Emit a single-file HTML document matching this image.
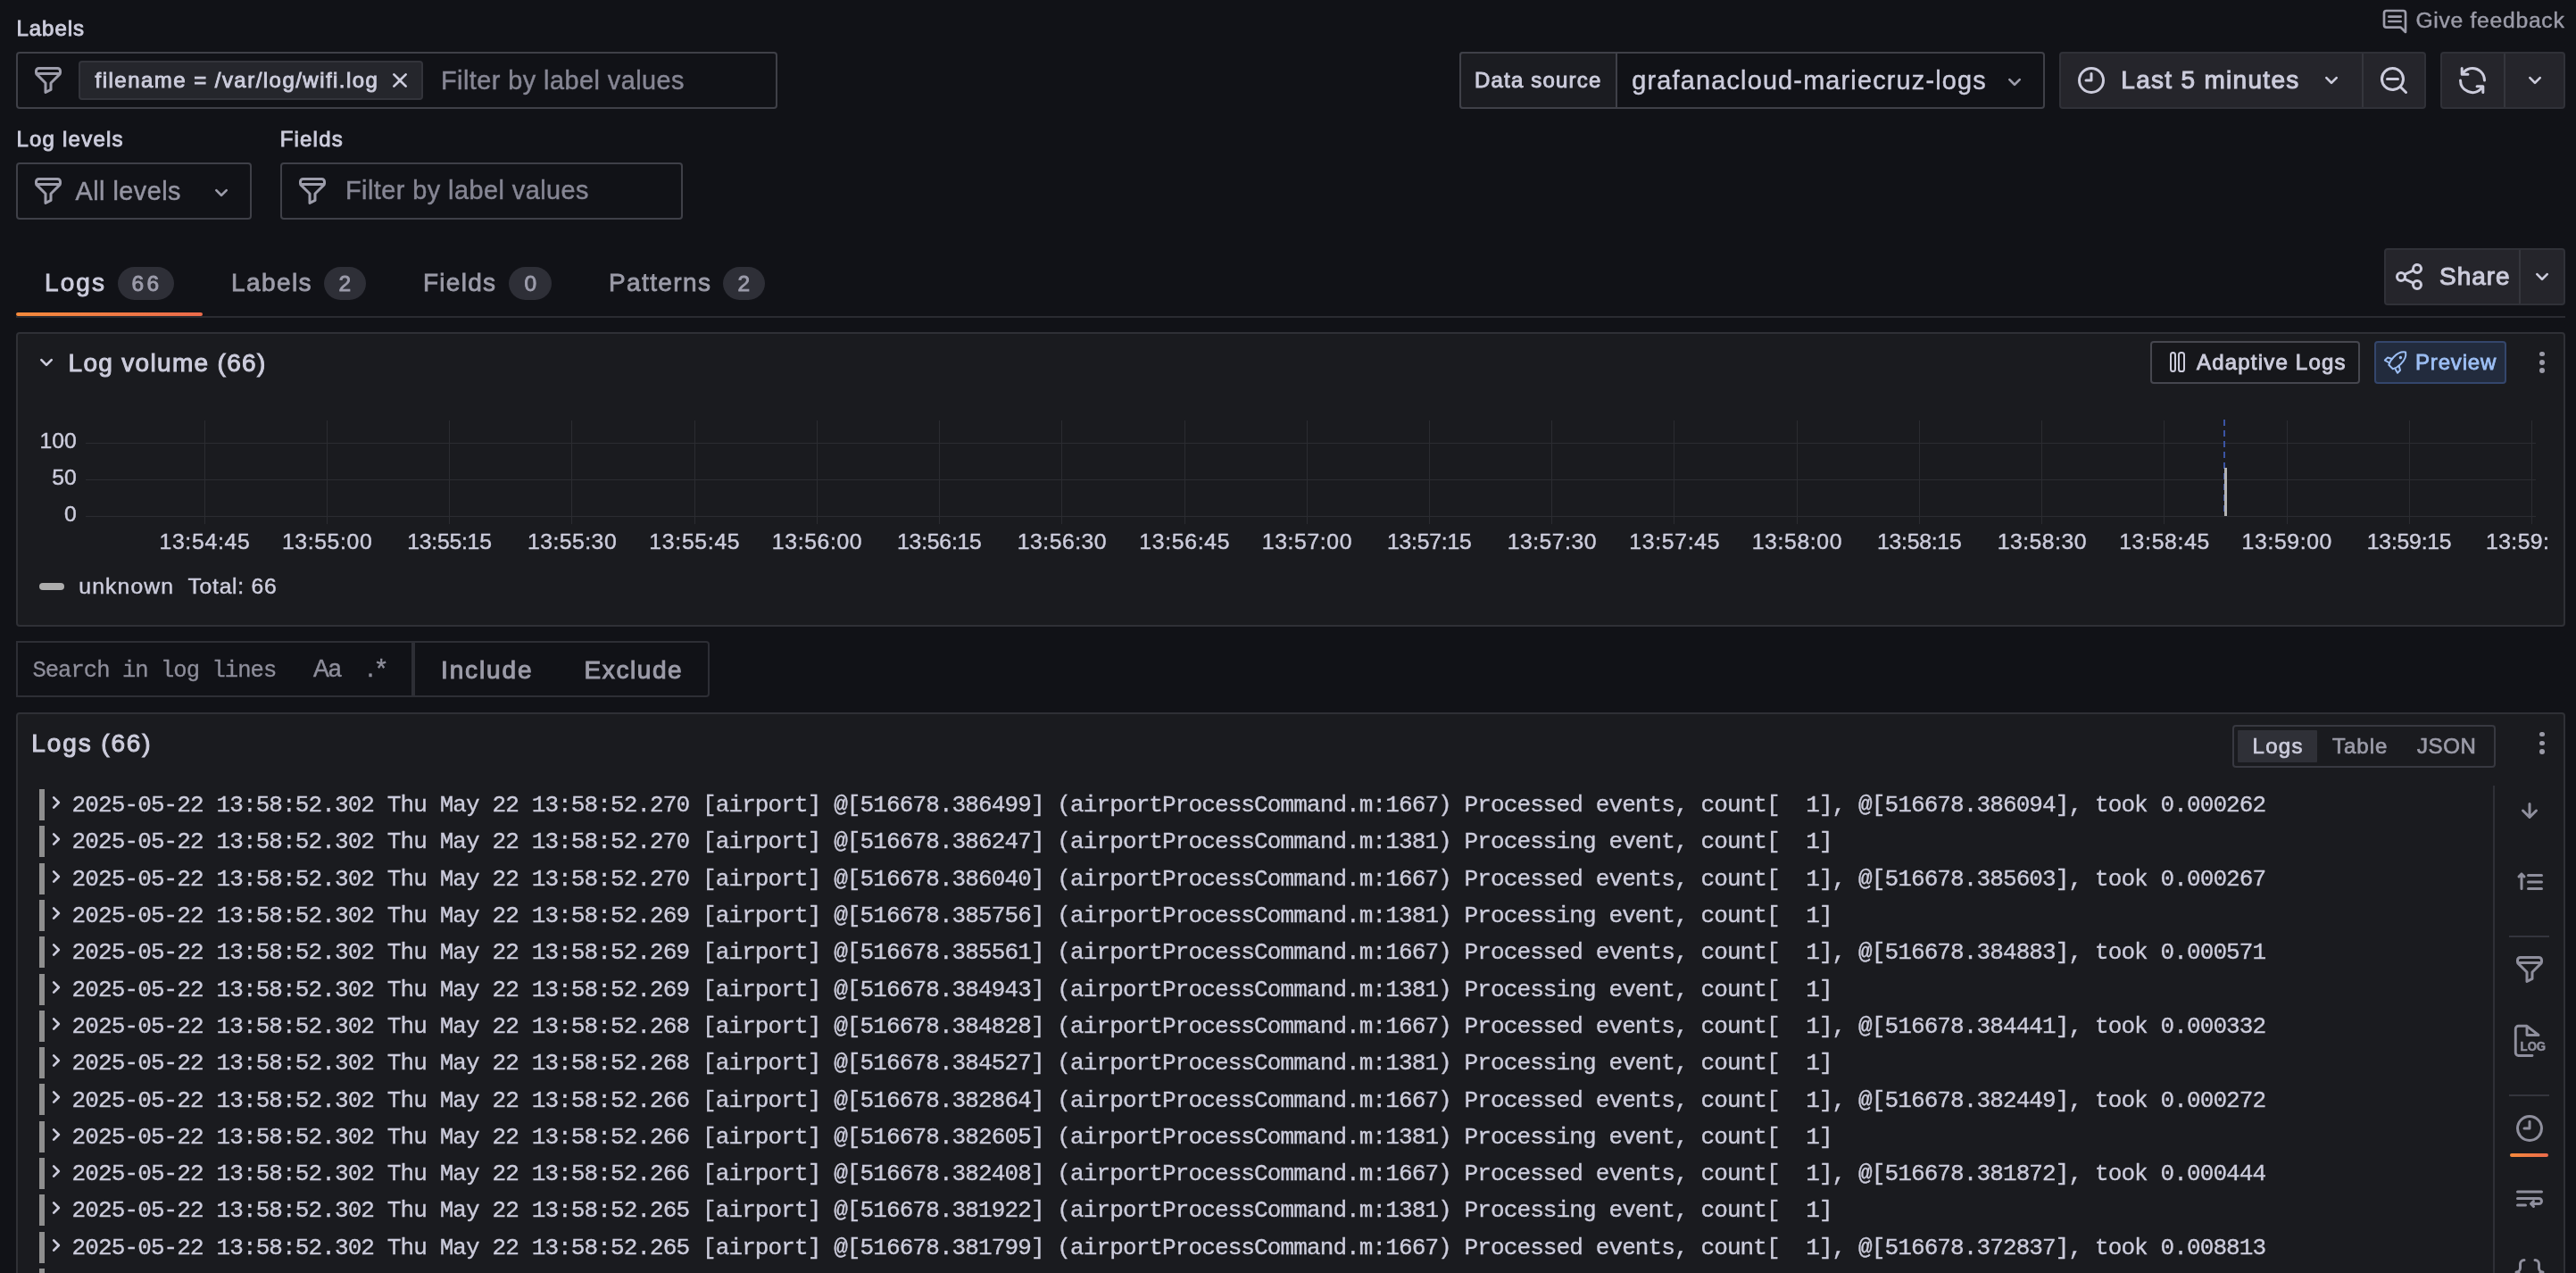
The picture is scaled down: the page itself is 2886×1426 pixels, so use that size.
<!DOCTYPE html>
<html lang="en"><head><meta charset="utf-8"><title>Logs Drilldown</title>
<style>
html,body{margin:0;padding:0;width:2886px;height:1426px;overflow:hidden;}
body{width:2886px;height:1426px;overflow:hidden;position:relative;background:#111217;font-family:"Liberation Sans",sans-serif;}
.a{position:absolute;box-sizing:border-box;}
.t{white-space:pre;}
</style></head><body>
<div id="app" style="position:absolute;left:0;top:0;width:2886px;height:1426px;overflow:hidden;will-change:transform">
<span class="a t" style="left:18.50px;top:19.68px;font:500 24.0px/24.0px 'Liberation Sans', sans-serif;color:#ccccdc;letter-spacing:0.955px;-webkit-text-stroke:0.9px #ccccdc;">Labels</span><div class="a" style="left:18px;top:58px;width:853px;height:64px;background:#111217;border:2px solid #3f4048;border-radius:4px;"></div><div class="a" style="left:88px;top:68px;width:386px;height:44px;background:#25262c;border:2px solid #33343b;border-radius:4px;"></div><span class="a t" style="left:106.60px;top:78.18px;font:500 24.0px/24.0px 'Liberation Sans', sans-serif;color:#ccccdc;letter-spacing:1.465px;-webkit-text-stroke:0.9px #ccccdc;">filename = /var/log/wifi.log</span><span class="a t" style="left:494.00px;top:75.59px;font:400 28.84px/28.84px 'Liberation Sans', sans-serif;color:#868694;letter-spacing:0.459px;-webkit-text-stroke:0.45px #868694;">Filter by label values</span><span class="a t" style="left:2706.40px;top:10.57px;font:400 24.72px/24.72px 'Liberation Sans', sans-serif;color:#9b9ba8;letter-spacing:0.695px;-webkit-text-stroke:0.45px #9b9ba8;">Give feedback</span><div class="a" style="left:1635px;top:58px;width:656px;height:64px;background:#111217;border:2px solid #3f4048;border-radius:4px;"></div><div class="a" style="left:1635px;top:58px;width:177px;height:64px;background:#1b1c21;border:2px solid #3f4048;border-radius:4px 0 0 4px;"></div><span class="a t" style="left:1652.00px;top:78.18px;font:500 24.0px/24.0px 'Liberation Sans', sans-serif;color:#ccccdc;letter-spacing:1.195px;-webkit-text-stroke:0.9px #ccccdc;">Data source</span><span class="a t" style="left:1828.30px;top:75.59px;font:400 28.84px/28.84px 'Liberation Sans', sans-serif;color:#ccccdc;letter-spacing:1.196px;-webkit-text-stroke:0.45px #ccccdc;">grafanacloud-mariecruz-logs</span><div class="a" style="left:2307px;top:58px;width:411px;height:64px;background:#25252b;border:2px solid #303138;border-radius:4px;"></div><div class="a" style="left:2646px;top:60px;width:2px;height:60px;background:#35363d;"></div><span class="a t" style="left:2376.30px;top:76.30px;font:500 28.0px/28.0px 'Liberation Sans', sans-serif;color:#ccccdc;letter-spacing:1.300px;-webkit-text-stroke:1.0px #ccccdc;">Last 5 minutes</span><div class="a" style="left:2734px;top:58px;width:140px;height:64px;background:#25252b;border:2px solid #303138;border-radius:4px;"></div><div class="a" style="left:2805px;top:60px;width:2px;height:60px;background:#35363d;"></div><span class="a t" style="left:18.50px;top:143.68px;font:500 24.0px/24.0px 'Liberation Sans', sans-serif;color:#ccccdc;letter-spacing:1.214px;-webkit-text-stroke:0.9px #ccccdc;">Log levels</span><div class="a" style="left:18px;top:182px;width:264px;height:64px;background:#111217;border:2px solid #3f4048;border-radius:4px;"></div><span class="a t" style="left:84.50px;top:199.59px;font:400 28.84px/28.84px 'Liberation Sans', sans-serif;color:#9494a2;letter-spacing:0.463px;-webkit-text-stroke:0.45px #9494a2;">All levels</span><span class="a t" style="left:313.70px;top:143.68px;font:500 24.0px/24.0px 'Liberation Sans', sans-serif;color:#ccccdc;letter-spacing:1.196px;-webkit-text-stroke:0.9px #ccccdc;">Fields</span><div class="a" style="left:314px;top:182px;width:451px;height:64px;background:#111217;border:2px solid #3f4048;border-radius:4px;"></div><span class="a t" style="left:387.00px;top:199.29px;font:400 28.84px/28.84px 'Liberation Sans', sans-serif;color:#868694;letter-spacing:0.459px;-webkit-text-stroke:0.45px #868694;">Filter by label values</span><div class="a" style="left:18px;top:354px;width:2856px;height:2px;background:#2a2b31;"></div><span class="a t" style="left:50.00px;top:302.60px;font:500 28.0px/28.0px 'Liberation Sans', sans-serif;color:#ccccdc;letter-spacing:2.094px;-webkit-text-stroke:0.9px #ccccdc;">Logs</span><div class="a" style="left:132px;top:299px;width:63px;height:37px;background:#2e2f37;border-radius:19px;"></div><span class="a t" style="left:147.60px;top:305.56px;font:500 24.5px/24.5px 'Liberation Sans', sans-serif;color:#9c9cab;letter-spacing:3.374px;-webkit-text-stroke:0.9px #9c9cab;">66</span><div class="a" style="left:18px;top:350px;width:209px;height:4px;border-radius:2px;background:linear-gradient(90deg,#f58a3c,#ec6b4b)"></div><span class="a t" style="left:259.00px;top:302.60px;font:500 28.0px/28.0px 'Liberation Sans', sans-serif;color:#9b9ba8;letter-spacing:1.398px;-webkit-text-stroke:0.8px #9b9ba8;">Labels</span><div class="a" style="left:363px;top:299px;width:47px;height:37px;background:#2e2f37;border-radius:19px;"></div><span class="a t" style="left:379.50px;top:305.56px;font:500 24.5px/24.5px 'Liberation Sans', sans-serif;color:#9c9cab;-webkit-text-stroke:0.9px #9c9cab;">2</span><span class="a t" style="left:474.00px;top:302.60px;font:500 28.0px/28.0px 'Liberation Sans', sans-serif;color:#9b9ba8;letter-spacing:1.262px;-webkit-text-stroke:0.8px #9b9ba8;">Fields</span><div class="a" style="left:570px;top:299px;width:48px;height:37px;background:#2e2f37;border-radius:19px;"></div><span class="a t" style="left:587.50px;top:305.56px;font:500 24.5px/24.5px 'Liberation Sans', sans-serif;color:#9c9cab;-webkit-text-stroke:0.9px #9c9cab;">0</span><span class="a t" style="left:682.00px;top:302.60px;font:500 28.0px/28.0px 'Liberation Sans', sans-serif;color:#9b9ba8;letter-spacing:1.389px;-webkit-text-stroke:0.8px #9b9ba8;">Patterns</span><div class="a" style="left:810px;top:299px;width:47px;height:37px;background:#2e2f37;border-radius:19px;"></div><span class="a t" style="left:826.50px;top:305.56px;font:500 24.5px/24.5px 'Liberation Sans', sans-serif;color:#9c9cab;-webkit-text-stroke:0.9px #9c9cab;">2</span><div class="a" style="left:2671px;top:278px;width:203px;height:64px;background:#25252b;border:2px solid #303138;border-radius:4px;"></div><div class="a" style="left:2822px;top:280px;width:2px;height:60px;background:#35363d;"></div><span class="a t" style="left:2733.00px;top:296.30px;font:500 28.0px/28.0px 'Liberation Sans', sans-serif;color:#ccccdc;letter-spacing:0.964px;-webkit-text-stroke:1.0px #ccccdc;">Share</span><div class="a" style="left:18px;top:372px;width:2856px;height:330px;background:#1a1b1f;border:2px solid #2f3036;border-radius:4px;"></div><span class="a t" style="left:76.50px;top:392.60px;font:500 28.0px/28.0px 'Liberation Sans', sans-serif;color:#ccccdc;letter-spacing:1.321px;-webkit-text-stroke:1.0px #ccccdc;">Log volume (66)</span><div class="a" style="left:2409px;top:382px;width:235px;height:48px;background:#16171b;border:2px solid #46474f;border-radius:4px;"></div><span class="a t" style="left:2461.00px;top:394.18px;font:500 24.0px/24.0px 'Liberation Sans', sans-serif;color:#ccccdc;letter-spacing:1.199px;-webkit-text-stroke:0.9px #ccccdc;">Adaptive Logs</span><div class="a" style="left:2660px;top:382px;width:148px;height:48px;background:#222b3d;border:2px solid #34466c;border-radius:4px;"></div><span class="a t" style="left:2706.00px;top:394.18px;font:500 24.0px/24.0px 'Liberation Sans', sans-serif;color:#9dbff5;letter-spacing:0.829px;-webkit-text-stroke:0.8px #9dbff5;">Preview</span><div class="a" style="left:2845px;top:393.7px;width:5.6px;height:5.6px;background:#9b9ba8;border-radius:3px;"></div><div class="a" style="left:2845px;top:403.0px;width:5.6px;height:5.6px;background:#9b9ba8;border-radius:3px;"></div><div class="a" style="left:2845px;top:412.4px;width:5.6px;height:5.6px;background:#9b9ba8;border-radius:3px;"></div><div class="a" style="left:96px;top:496px;width:2745px;height:1px;background:#2b2c31;"></div><div class="a" style="left:96px;top:537px;width:2745px;height:1px;background:#2b2c31;"></div><div class="a" style="left:96px;top:578px;width:2745px;height:1px;background:#2b2c31;"></div><div class="a" style="left:228.7px;top:470.5px;width:1px;height:116px;background:#2b2c31;"></div><div class="a" style="left:365.93px;top:470.5px;width:1px;height:116px;background:#2b2c31;"></div><div class="a" style="left:503.16px;top:470.5px;width:1px;height:116px;background:#2b2c31;"></div><div class="a" style="left:640.39px;top:470.5px;width:1px;height:116px;background:#2b2c31;"></div><div class="a" style="left:777.62px;top:470.5px;width:1px;height:116px;background:#2b2c31;"></div><div class="a" style="left:914.85px;top:470.5px;width:1px;height:116px;background:#2b2c31;"></div><div class="a" style="left:1052.08px;top:470.5px;width:1px;height:116px;background:#2b2c31;"></div><div class="a" style="left:1189.31px;top:470.5px;width:1px;height:116px;background:#2b2c31;"></div><div class="a" style="left:1326.54px;top:470.5px;width:1px;height:116px;background:#2b2c31;"></div><div class="a" style="left:1463.77px;top:470.5px;width:1px;height:116px;background:#2b2c31;"></div><div class="a" style="left:1601.0px;top:470.5px;width:1px;height:116px;background:#2b2c31;"></div><div class="a" style="left:1738.23px;top:470.5px;width:1px;height:116px;background:#2b2c31;"></div><div class="a" style="left:1875.46px;top:470.5px;width:1px;height:116px;background:#2b2c31;"></div><div class="a" style="left:2012.69px;top:470.5px;width:1px;height:116px;background:#2b2c31;"></div><div class="a" style="left:2149.92px;top:470.5px;width:1px;height:116px;background:#2b2c31;"></div><div class="a" style="left:2287.15px;top:470.5px;width:1px;height:116px;background:#2b2c31;"></div><div class="a" style="left:2424.38px;top:470.5px;width:1px;height:116px;background:#2b2c31;"></div><div class="a" style="left:2561.61px;top:470.5px;width:1px;height:116px;background:#2b2c31;"></div><div class="a" style="left:2698.84px;top:470.5px;width:1px;height:116px;background:#2b2c31;"></div><div class="a" style="left:2836.07px;top:470.5px;width:1px;height:116px;background:#2b2c31;"></div><span class="a t" style="left:44.51px;top:482.07px;font:400 24.72px/24.72px 'Liberation Sans', sans-serif;color:#ccccdc;-webkit-text-stroke:0.45px #ccccdc;">100</span><span class="a t" style="left:58.25px;top:523.07px;font:400 24.72px/24.72px 'Liberation Sans', sans-serif;color:#ccccdc;-webkit-text-stroke:0.45px #ccccdc;">50</span><span class="a t" style="left:72.00px;top:564.07px;font:400 24.72px/24.72px 'Liberation Sans', sans-serif;color:#ccccdc;-webkit-text-stroke:0.45px #ccccdc;">0</span><span class="a t" style="left:178.45px;top:594.57px;font:400 24.72px/24.72px 'Liberation Sans', sans-serif;color:#ccccdc;letter-spacing:0.718px;-webkit-text-stroke:0.45px #ccccdc;">13:54:45</span><span class="a t" style="left:315.93px;top:594.57px;font:400 24.72px/24.72px 'Liberation Sans', sans-serif;color:#ccccdc;letter-spacing:0.647px;-webkit-text-stroke:0.45px #ccccdc;">13:55:00</span><span class="a t" style="left:456.16px;top:594.57px;font:400 24.72px/24.72px 'Liberation Sans', sans-serif;color:#ccccdc;letter-spacing:-0.210px;-webkit-text-stroke:0.45px #ccccdc;">13:55:15</span><span class="a t" style="left:590.89px;top:594.57px;font:400 24.72px/24.72px 'Liberation Sans', sans-serif;color:#ccccdc;letter-spacing:0.504px;-webkit-text-stroke:0.45px #ccccdc;">13:55:30</span><span class="a t" style="left:727.37px;top:594.57px;font:400 24.72px/24.72px 'Liberation Sans', sans-serif;color:#ccccdc;letter-spacing:0.718px;-webkit-text-stroke:0.45px #ccccdc;">13:55:45</span><span class="a t" style="left:864.85px;top:594.57px;font:400 24.72px/24.72px 'Liberation Sans', sans-serif;color:#ccccdc;letter-spacing:0.647px;-webkit-text-stroke:0.45px #ccccdc;">13:56:00</span><span class="a t" style="left:1005.08px;top:594.57px;font:400 24.72px/24.72px 'Liberation Sans', sans-serif;color:#ccccdc;letter-spacing:-0.210px;-webkit-text-stroke:0.45px #ccccdc;">13:56:15</span><span class="a t" style="left:1139.81px;top:594.57px;font:400 24.72px/24.72px 'Liberation Sans', sans-serif;color:#ccccdc;letter-spacing:0.504px;-webkit-text-stroke:0.45px #ccccdc;">13:56:30</span><span class="a t" style="left:1276.29px;top:594.57px;font:400 24.72px/24.72px 'Liberation Sans', sans-serif;color:#ccccdc;letter-spacing:0.718px;-webkit-text-stroke:0.45px #ccccdc;">13:56:45</span><span class="a t" style="left:1413.77px;top:594.57px;font:400 24.72px/24.72px 'Liberation Sans', sans-serif;color:#ccccdc;letter-spacing:0.647px;-webkit-text-stroke:0.45px #ccccdc;">13:57:00</span><span class="a t" style="left:1554.00px;top:594.57px;font:400 24.72px/24.72px 'Liberation Sans', sans-serif;color:#ccccdc;letter-spacing:-0.210px;-webkit-text-stroke:0.45px #ccccdc;">13:57:15</span><span class="a t" style="left:1688.73px;top:594.57px;font:400 24.72px/24.72px 'Liberation Sans', sans-serif;color:#ccccdc;letter-spacing:0.504px;-webkit-text-stroke:0.45px #ccccdc;">13:57:30</span><span class="a t" style="left:1825.21px;top:594.57px;font:400 24.72px/24.72px 'Liberation Sans', sans-serif;color:#ccccdc;letter-spacing:0.718px;-webkit-text-stroke:0.45px #ccccdc;">13:57:45</span><span class="a t" style="left:1962.69px;top:594.57px;font:400 24.72px/24.72px 'Liberation Sans', sans-serif;color:#ccccdc;letter-spacing:0.647px;-webkit-text-stroke:0.45px #ccccdc;">13:58:00</span><span class="a t" style="left:2102.92px;top:594.57px;font:400 24.72px/24.72px 'Liberation Sans', sans-serif;color:#ccccdc;letter-spacing:-0.210px;-webkit-text-stroke:0.45px #ccccdc;">13:58:15</span><span class="a t" style="left:2237.65px;top:594.57px;font:400 24.72px/24.72px 'Liberation Sans', sans-serif;color:#ccccdc;letter-spacing:0.504px;-webkit-text-stroke:0.45px #ccccdc;">13:58:30</span><span class="a t" style="left:2374.13px;top:594.57px;font:400 24.72px/24.72px 'Liberation Sans', sans-serif;color:#ccccdc;letter-spacing:0.718px;-webkit-text-stroke:0.45px #ccccdc;">13:58:45</span><span class="a t" style="left:2511.61px;top:594.57px;font:400 24.72px/24.72px 'Liberation Sans', sans-serif;color:#ccccdc;letter-spacing:0.647px;-webkit-text-stroke:0.45px #ccccdc;">13:59:00</span><span class="a t" style="left:2651.84px;top:594.57px;font:400 24.72px/24.72px 'Liberation Sans', sans-serif;color:#ccccdc;letter-spacing:-0.210px;-webkit-text-stroke:0.45px #ccccdc;">13:59:15</span><span class="a t" style="left:2785.00px;top:594.57px;font:400 24.72px/24.72px 'Liberation Sans', sans-serif;color:#ccccdc;letter-spacing:0.429px;-webkit-text-stroke:0.45px #ccccdc;">13:59:</span><div class="a" style="left:2490.6px;top:470px;width:2px;height:108px;background:repeating-linear-gradient(180deg,#3b54a3 0 7px,transparent 7px 12px)"></div><div class="a" style="left:2491.6px;top:524px;width:3px;height:54px;background:#b3b3b3;"></div><div class="a" style="left:44px;top:653px;width:28px;height:8px;background:#adadad;border-radius:4px;"></div><span class="a t" style="left:88.30px;top:645.07px;font:400 24.72px/24.72px 'Liberation Sans', sans-serif;color:#ccccdc;letter-spacing:1.133px;-webkit-text-stroke:0.45px #ccccdc;">unknown</span><span class="a t" style="left:210.50px;top:645.07px;font:400 24.72px/24.72px 'Liberation Sans', sans-serif;color:#ccccdc;letter-spacing:0.725px;-webkit-text-stroke:0.45px #ccccdc;">Total: 66</span><div class="a" style="left:18px;top:718px;width:445px;height:63px;background:#111217;border:2px solid #2d2e35;"></div><span class="a t" style="left:36.40px;top:738.85px;font:400 25.5px/25.5px 'Liberation Mono', monospace;color:#8e8e9b;letter-spacing:-0.941px;-webkit-text-stroke:0.3px #8e8e9b;">Search in log lines</span><span class="a t" style="left:351.00px;top:735.93px;font:400 26.78px/26.78px 'Liberation Sans', sans-serif;color:#8e8e9b;letter-spacing:-1.152px;-webkit-text-stroke:0.45px #8e8e9b;">Aa</span><span class="a t" style="left:411.00px;top:734.19px;font:400 28.84px/28.84px 'Liberation Sans', sans-serif;color:#8e8e9b;letter-spacing:2.491px;-webkit-text-stroke:0.45px #8e8e9b;">.*</span><div class="a" style="left:463px;top:718px;width:332px;height:63px;background:#111217;border:2px solid #2d2e35;border-radius:4px;border-radius:0 4px 4px 0;"></div><span class="a t" style="left:494.00px;top:736.60px;font:500 28.0px/28.0px 'Liberation Sans', sans-serif;color:#9b9ba8;letter-spacing:1.881px;-webkit-text-stroke:1.0px #9b9ba8;">Include</span><span class="a t" style="left:654.60px;top:736.60px;font:500 28.0px/28.0px 'Liberation Sans', sans-serif;color:#9b9ba8;letter-spacing:1.576px;-webkit-text-stroke:1.0px #9b9ba8;">Exclude</span><div class="a" style="left:18px;top:798px;width:2856px;height:660px;background:#1a1b1f;border:2px solid #2f3036;border-radius:4px;"></div><span class="a t" style="left:35.30px;top:818.70px;font:500 28.0px/28.0px 'Liberation Sans', sans-serif;color:#ccccdc;letter-spacing:1.879px;-webkit-text-stroke:1.0px #ccccdc;">Logs (66)</span><div class="a" style="left:2501px;top:812px;width:295px;height:48px;background:transparent;border:2px solid #383941;border-radius:4px;"></div><div class="a" style="left:2507px;top:818px;width:89px;height:36px;background:#2f3037;border-radius:1px;"></div><span class="a t" style="left:2523.50px;top:824.28px;font:500 24.0px/24.0px 'Liberation Sans', sans-serif;color:#ccccdc;letter-spacing:1.319px;-webkit-text-stroke:0.7px #ccccdc;">Logs</span><span class="a t" style="left:2613.00px;top:824.28px;font:500 24.0px/24.0px 'Liberation Sans', sans-serif;color:#9b9ba8;letter-spacing:0.993px;-webkit-text-stroke:0.66px #9b9ba8;">Table</span><span class="a t" style="left:2708.00px;top:824.28px;font:500 24.0px/24.0px 'Liberation Sans', sans-serif;color:#9b9ba8;letter-spacing:0.608px;-webkit-text-stroke:0.66px #9b9ba8;">JSON</span><div class="a" style="left:2845px;top:819.9000000000001px;width:5.6px;height:5.6px;background:#9b9ba8;border-radius:3px;"></div><div class="a" style="left:2845px;top:829.5px;width:5.6px;height:5.6px;background:#9b9ba8;border-radius:3px;"></div><div class="a" style="left:2845px;top:839.1px;width:5.6px;height:5.6px;background:#9b9ba8;border-radius:3px;"></div><div class="a" style="left:2793px;top:880px;width:2px;height:560px;background:#2f3037;"></div><div class="a" style="left:2811px;top:1048px;width:45px;height:2px;background:#34353d;"></div><div class="a" style="left:2811px;top:1226px;width:45px;height:2px;background:#34353d;"></div><div class="a" style="left:2812px;top:1292px;width:43px;height:4px;border-radius:2px;background:linear-gradient(90deg,#f58a3c,#ec6b4b)"></div><div class="a" style="left:44px;top:884.0px;width:6px;height:35px;background:#8e8e8e;"></div><span class="a t" style="left:80.60px;top:889.07px;font:400 26px/26px 'Liberation Mono', monospace;color:#ccccdc;letter-spacing:-0.886px;-webkit-text-stroke:0.35px #ccccdc;">2025-05-22 13:58:52.302 Thu May 22 13:58:52.270 [airport] @[516678.386499] (airportProcessCommand.m:1667) Processed events, count[  1], @[516678.386094], took 0.000262</span><svg class="a" style="left:47.4px;top:883.0px" width="32" height="32" viewBox="0 0 24 24" fill="#ccccdc"><path d="M14.83,11.29,10.59,7.05a1,1,0,0,0-1.42,0,1,1,0,0,0,0,1.41L12.71,12,9.17,15.54a1,1,0,0,0,0,1.41,1,1,0,0,0,.71.29,1,1,0,0,0,.71-.29l4.24-4.24A1,1,0,0,0,14.83,11.29Z"/></svg><div class="a" style="left:44px;top:925.31px;width:6px;height:35px;background:#8e8e8e;"></div><span class="a t" style="left:80.60px;top:930.38px;font:400 26px/26px 'Liberation Mono', monospace;color:#ccccdc;letter-spacing:-0.886px;-webkit-text-stroke:0.35px #ccccdc;">2025-05-22 13:58:52.302 Thu May 22 13:58:52.270 [airport] @[516678.386247] (airportProcessCommand.m:1381) Processing event, count[  1]</span><svg class="a" style="left:47.4px;top:924.31px" width="32" height="32" viewBox="0 0 24 24" fill="#ccccdc"><path d="M14.83,11.29,10.59,7.05a1,1,0,0,0-1.42,0,1,1,0,0,0,0,1.41L12.71,12,9.17,15.54a1,1,0,0,0,0,1.41,1,1,0,0,0,.71.29,1,1,0,0,0,.71-.29l4.24-4.24A1,1,0,0,0,14.83,11.29Z"/></svg><div class="a" style="left:44px;top:966.62px;width:6px;height:35px;background:#8e8e8e;"></div><span class="a t" style="left:80.60px;top:971.69px;font:400 26px/26px 'Liberation Mono', monospace;color:#ccccdc;letter-spacing:-0.886px;-webkit-text-stroke:0.35px #ccccdc;">2025-05-22 13:58:52.302 Thu May 22 13:58:52.270 [airport] @[516678.386040] (airportProcessCommand.m:1667) Processed events, count[  1], @[516678.385603], took 0.000267</span><svg class="a" style="left:47.4px;top:965.62px" width="32" height="32" viewBox="0 0 24 24" fill="#ccccdc"><path d="M14.83,11.29,10.59,7.05a1,1,0,0,0-1.42,0,1,1,0,0,0,0,1.41L12.71,12,9.17,15.54a1,1,0,0,0,0,1.41,1,1,0,0,0,.71.29,1,1,0,0,0,.71-.29l4.24-4.24A1,1,0,0,0,14.83,11.29Z"/></svg><div class="a" style="left:44px;top:1007.93px;width:6px;height:35px;background:#8e8e8e;"></div><span class="a t" style="left:80.60px;top:1013.00px;font:400 26px/26px 'Liberation Mono', monospace;color:#ccccdc;letter-spacing:-0.886px;-webkit-text-stroke:0.35px #ccccdc;">2025-05-22 13:58:52.302 Thu May 22 13:58:52.269 [airport] @[516678.385756] (airportProcessCommand.m:1381) Processing event, count[  1]</span><svg class="a" style="left:47.4px;top:1006.93px" width="32" height="32" viewBox="0 0 24 24" fill="#ccccdc"><path d="M14.83,11.29,10.59,7.05a1,1,0,0,0-1.42,0,1,1,0,0,0,0,1.41L12.71,12,9.17,15.54a1,1,0,0,0,0,1.41,1,1,0,0,0,.71.29,1,1,0,0,0,.71-.29l4.24-4.24A1,1,0,0,0,14.83,11.29Z"/></svg><div class="a" style="left:44px;top:1049.24px;width:6px;height:35px;background:#8e8e8e;"></div><span class="a t" style="left:80.60px;top:1054.31px;font:400 26px/26px 'Liberation Mono', monospace;color:#ccccdc;letter-spacing:-0.886px;-webkit-text-stroke:0.35px #ccccdc;">2025-05-22 13:58:52.302 Thu May 22 13:58:52.269 [airport] @[516678.385561] (airportProcessCommand.m:1667) Processed events, count[  1], @[516678.384883], took 0.000571</span><svg class="a" style="left:47.4px;top:1048.24px" width="32" height="32" viewBox="0 0 24 24" fill="#ccccdc"><path d="M14.83,11.29,10.59,7.05a1,1,0,0,0-1.42,0,1,1,0,0,0,0,1.41L12.71,12,9.17,15.54a1,1,0,0,0,0,1.41,1,1,0,0,0,.71.29,1,1,0,0,0,.71-.29l4.24-4.24A1,1,0,0,0,14.83,11.29Z"/></svg><div class="a" style="left:44px;top:1090.55px;width:6px;height:35px;background:#8e8e8e;"></div><span class="a t" style="left:80.60px;top:1095.62px;font:400 26px/26px 'Liberation Mono', monospace;color:#ccccdc;letter-spacing:-0.886px;-webkit-text-stroke:0.35px #ccccdc;">2025-05-22 13:58:52.302 Thu May 22 13:58:52.269 [airport] @[516678.384943] (airportProcessCommand.m:1381) Processing event, count[  1]</span><svg class="a" style="left:47.4px;top:1089.55px" width="32" height="32" viewBox="0 0 24 24" fill="#ccccdc"><path d="M14.83,11.29,10.59,7.05a1,1,0,0,0-1.42,0,1,1,0,0,0,0,1.41L12.71,12,9.17,15.54a1,1,0,0,0,0,1.41,1,1,0,0,0,.71.29,1,1,0,0,0,.71-.29l4.24-4.24A1,1,0,0,0,14.83,11.29Z"/></svg><div class="a" style="left:44px;top:1131.86px;width:6px;height:35px;background:#8e8e8e;"></div><span class="a t" style="left:80.60px;top:1136.93px;font:400 26px/26px 'Liberation Mono', monospace;color:#ccccdc;letter-spacing:-0.886px;-webkit-text-stroke:0.35px #ccccdc;">2025-05-22 13:58:52.302 Thu May 22 13:58:52.268 [airport] @[516678.384828] (airportProcessCommand.m:1667) Processed events, count[  1], @[516678.384441], took 0.000332</span><svg class="a" style="left:47.4px;top:1130.86px" width="32" height="32" viewBox="0 0 24 24" fill="#ccccdc"><path d="M14.83,11.29,10.59,7.05a1,1,0,0,0-1.42,0,1,1,0,0,0,0,1.41L12.71,12,9.17,15.54a1,1,0,0,0,0,1.41,1,1,0,0,0,.71.29,1,1,0,0,0,.71-.29l4.24-4.24A1,1,0,0,0,14.83,11.29Z"/></svg><div class="a" style="left:44px;top:1173.17px;width:6px;height:35px;background:#8e8e8e;"></div><span class="a t" style="left:80.60px;top:1178.24px;font:400 26px/26px 'Liberation Mono', monospace;color:#ccccdc;letter-spacing:-0.886px;-webkit-text-stroke:0.35px #ccccdc;">2025-05-22 13:58:52.302 Thu May 22 13:58:52.268 [airport] @[516678.384527] (airportProcessCommand.m:1381) Processing event, count[  1]</span><svg class="a" style="left:47.4px;top:1172.17px" width="32" height="32" viewBox="0 0 24 24" fill="#ccccdc"><path d="M14.83,11.29,10.59,7.05a1,1,0,0,0-1.42,0,1,1,0,0,0,0,1.41L12.71,12,9.17,15.54a1,1,0,0,0,0,1.41,1,1,0,0,0,.71.29,1,1,0,0,0,.71-.29l4.24-4.24A1,1,0,0,0,14.83,11.29Z"/></svg><div class="a" style="left:44px;top:1214.48px;width:6px;height:35px;background:#8e8e8e;"></div><span class="a t" style="left:80.60px;top:1219.55px;font:400 26px/26px 'Liberation Mono', monospace;color:#ccccdc;letter-spacing:-0.886px;-webkit-text-stroke:0.35px #ccccdc;">2025-05-22 13:58:52.302 Thu May 22 13:58:52.266 [airport] @[516678.382864] (airportProcessCommand.m:1667) Processed events, count[  1], @[516678.382449], took 0.000272</span><svg class="a" style="left:47.4px;top:1213.48px" width="32" height="32" viewBox="0 0 24 24" fill="#ccccdc"><path d="M14.83,11.29,10.59,7.05a1,1,0,0,0-1.42,0,1,1,0,0,0,0,1.41L12.71,12,9.17,15.54a1,1,0,0,0,0,1.41,1,1,0,0,0,.71.29,1,1,0,0,0,.71-.29l4.24-4.24A1,1,0,0,0,14.83,11.29Z"/></svg><div class="a" style="left:44px;top:1255.79px;width:6px;height:35px;background:#8e8e8e;"></div><span class="a t" style="left:80.60px;top:1260.86px;font:400 26px/26px 'Liberation Mono', monospace;color:#ccccdc;letter-spacing:-0.886px;-webkit-text-stroke:0.35px #ccccdc;">2025-05-22 13:58:52.302 Thu May 22 13:58:52.266 [airport] @[516678.382605] (airportProcessCommand.m:1381) Processing event, count[  1]</span><svg class="a" style="left:47.4px;top:1254.79px" width="32" height="32" viewBox="0 0 24 24" fill="#ccccdc"><path d="M14.83,11.29,10.59,7.05a1,1,0,0,0-1.42,0,1,1,0,0,0,0,1.41L12.71,12,9.17,15.54a1,1,0,0,0,0,1.41,1,1,0,0,0,.71.29,1,1,0,0,0,.71-.29l4.24-4.24A1,1,0,0,0,14.83,11.29Z"/></svg><div class="a" style="left:44px;top:1297.1px;width:6px;height:35px;background:#8e8e8e;"></div><span class="a t" style="left:80.60px;top:1302.17px;font:400 26px/26px 'Liberation Mono', monospace;color:#ccccdc;letter-spacing:-0.886px;-webkit-text-stroke:0.35px #ccccdc;">2025-05-22 13:58:52.302 Thu May 22 13:58:52.266 [airport] @[516678.382408] (airportProcessCommand.m:1667) Processed events, count[  1], @[516678.381872], took 0.000444</span><svg class="a" style="left:47.4px;top:1296.1px" width="32" height="32" viewBox="0 0 24 24" fill="#ccccdc"><path d="M14.83,11.29,10.59,7.05a1,1,0,0,0-1.42,0,1,1,0,0,0,0,1.41L12.71,12,9.17,15.54a1,1,0,0,0,0,1.41,1,1,0,0,0,.71.29,1,1,0,0,0,.71-.29l4.24-4.24A1,1,0,0,0,14.83,11.29Z"/></svg><div class="a" style="left:44px;top:1338.41px;width:6px;height:35px;background:#8e8e8e;"></div><span class="a t" style="left:80.60px;top:1343.48px;font:400 26px/26px 'Liberation Mono', monospace;color:#ccccdc;letter-spacing:-0.886px;-webkit-text-stroke:0.35px #ccccdc;">2025-05-22 13:58:52.302 Thu May 22 13:58:52.265 [airport] @[516678.381922] (airportProcessCommand.m:1381) Processing event, count[  1]</span><svg class="a" style="left:47.4px;top:1337.41px" width="32" height="32" viewBox="0 0 24 24" fill="#ccccdc"><path d="M14.83,11.29,10.59,7.05a1,1,0,0,0-1.42,0,1,1,0,0,0,0,1.41L12.71,12,9.17,15.54a1,1,0,0,0,0,1.41,1,1,0,0,0,.71.29,1,1,0,0,0,.71-.29l4.24-4.24A1,1,0,0,0,14.83,11.29Z"/></svg><div class="a" style="left:44px;top:1379.72px;width:6px;height:35px;background:#8e8e8e;"></div><span class="a t" style="left:80.60px;top:1384.79px;font:400 26px/26px 'Liberation Mono', monospace;color:#ccccdc;letter-spacing:-0.886px;-webkit-text-stroke:0.35px #ccccdc;">2025-05-22 13:58:52.302 Thu May 22 13:58:52.265 [airport] @[516678.381799] (airportProcessCommand.m:1667) Processed events, count[  1], @[516678.372837], took 0.008813</span><svg class="a" style="left:47.4px;top:1378.72px" width="32" height="32" viewBox="0 0 24 24" fill="#ccccdc"><path d="M14.83,11.29,10.59,7.05a1,1,0,0,0-1.42,0,1,1,0,0,0,0,1.41L12.71,12,9.17,15.54a1,1,0,0,0,0,1.41,1,1,0,0,0,.71.29,1,1,0,0,0,.71-.29l4.24-4.24A1,1,0,0,0,14.83,11.29Z"/></svg><div class="a" style="left:44px;top:1421.03px;width:6px;height:35px;background:#8e8e8e;"></div><span class="a t" style="left:80.60px;top:1426.10px;font:400 26px/26px 'Liberation Mono', monospace;color:#ccccdc;letter-spacing:-0.886px;-webkit-text-stroke:0.35px #ccccdc;">2025-05-22 13:58:52.302 Thu May 22 13:58:52.265 [airport] @[516678.381500] (airportProcessCommand.m:1381) Processing event, count[  1]</span><svg class="a" style="left:47.4px;top:1420.03px" width="32" height="32" viewBox="0 0 24 24" fill="#ccccdc"><path d="M14.83,11.29,10.59,7.05a1,1,0,0,0-1.42,0,1,1,0,0,0,0,1.41L12.71,12,9.17,15.54a1,1,0,0,0,0,1.41,1,1,0,0,0,.71.29,1,1,0,0,0,.71-.29l4.24-4.24A1,1,0,0,0,14.83,11.29Z"/></svg><svg class="a" style="left:36px;top:72px" width="36" height="36" viewBox="0 0 24 24" fill="#9d9dab"><path d="M19,2H5A3,3,0,0,0,2,5V6.17a3,3,0,0,0,.25,1.2l0,.06a2.81,2.81,0,0,0,.59.86L9,14.41V21a1,1,0,0,0,.47.85A1,1,0,0,0,10,22a1,1,0,0,0,.45-.11l4-2A1,1,0,0,0,15,19V14.41l6.12-6.12a2.81,2.81,0,0,0,.59-.86l0-.06A3,3,0,0,0,22,6.17V5A3,3,0,0,0,19,2ZM13.29,13.29A1,1,0,0,0,13,14v4.38l-2,1V14a1,1,0,0,0-.29-.71L5.41,8H18.59ZM20,6H4V5A1,1,0,0,1,5,4H19a1,1,0,0,1,1,1Z"/></svg><svg class="a" style="left:36px;top:196px" width="36" height="36" viewBox="0 0 24 24" fill="#9d9dab"><path d="M19,2H5A3,3,0,0,0,2,5V6.17a3,3,0,0,0,.25,1.2l0,.06a2.81,2.81,0,0,0,.59.86L9,14.41V21a1,1,0,0,0,.47.85A1,1,0,0,0,10,22a1,1,0,0,0,.45-.11l4-2A1,1,0,0,0,15,19V14.41l6.12-6.12a2.81,2.81,0,0,0,.59-.86l0-.06A3,3,0,0,0,22,6.17V5A3,3,0,0,0,19,2ZM13.29,13.29A1,1,0,0,0,13,14v4.38l-2,1V14a1,1,0,0,0-.29-.71L5.41,8H18.59ZM20,6H4V5A1,1,0,0,1,5,4H19a1,1,0,0,1,1,1Z"/></svg><svg class="a" style="left:332px;top:196px" width="36" height="36" viewBox="0 0 24 24" fill="#9d9dab"><path d="M19,2H5A3,3,0,0,0,2,5V6.17a3,3,0,0,0,.25,1.2l0,.06a2.81,2.81,0,0,0,.59.86L9,14.41V21a1,1,0,0,0,.47.85A1,1,0,0,0,10,22a1,1,0,0,0,.45-.11l4-2A1,1,0,0,0,15,19V14.41l6.12-6.12a2.81,2.81,0,0,0,.59-.86l0-.06A3,3,0,0,0,22,6.17V5A3,3,0,0,0,19,2ZM13.29,13.29A1,1,0,0,0,13,14v4.38l-2,1V14a1,1,0,0,0-.29-.71L5.41,8H18.59ZM20,6H4V5A1,1,0,0,1,5,4H19a1,1,0,0,1,1,1Z"/></svg><svg class="a" style="left:432px;top:74px" width="32" height="32" viewBox="0 0 24 24" fill="#ccccdc"><path d="M13.41,12l4.3-4.29a1,1,0,1,0-1.42-1.42L12,10.59,7.71,6.29A1,1,0,0,0,6.29,7.71L10.59,12l-4.3,4.29a1,1,0,0,0,0,1.42,1,1,0,0,0,1.42,0L12,13.41l4.29,4.3a1,1,0,0,0,1.42,0,1,1,0,0,0,0-1.42Z"/></svg><svg class="a" style="left:232px;top:200px" width="32" height="32" viewBox="0 0 24 24" fill="#9d9dab"><path d="M17,9.17a1,1,0,0,0-1.41,0L12,12.71,8.46,9.17a1,1,0,0,0-1.41,0,1,1,0,0,0,0,1.42l4.24,4.24a1,1,0,0,0,1.42,0L17,10.59A1,1,0,0,0,17,9.17Z"/></svg><svg class="a" style="left:2667px;top:8px" width="32" height="32" viewBox="0 0 24 24" fill="#9d9dab"><path d="M17,7H7A1,1,0,0,0,7,9H17a1,1,0,0,0,0-2Zm0,4H7a1,1,0,0,0,0,2H17a1,1,0,0,0,0-2Zm2-9H5A3,3,0,0,0,2,5V15a3,3,0,0,0,3,3H16.59l3.7,3.71A1,1,0,0,0,21,22a.84.84,0,0,0,.38-.08A1,1,0,0,0,22,21V5A3,3,0,0,0,19,2Zm1,16.59-2.29-2.3A1,1,0,0,0,17,16H5a1,1,0,0,1-1-1V5A1,1,0,0,1,5,4H19a1,1,0,0,1,1,1Z"/></svg><svg class="a" style="left:2241px;top:76px" width="32" height="32" viewBox="0 0 24 24" fill="#9d9dab"><path d="M17,9.17a1,1,0,0,0-1.41,0L12,12.71,8.46,9.17a1,1,0,0,0-1.41,0,1,1,0,0,0,0,1.42l4.24,4.24a1,1,0,0,0,1.42,0L17,10.59A1,1,0,0,0,17,9.17Z"/></svg><svg class="a" style="left:2325px;top:72px" width="36" height="36" viewBox="0 0 24 24" fill="#ccccdc"><path d="M12,2A10,10,0,1,0,22,12,10.01114,10.01114,0,0,0,12,2Zm0,18a8,8,0,1,1,8-8A8.00917,8.00917,0,0,1,12,20ZM12,6a.99974.99974,0,0,0-1,1v4H8a1,1,0,0,0,0,2h4a.99974.99974,0,0,0,1-1V7A.99974.99974,0,0,0,12,6Z"/></svg><svg class="a" style="left:2596px;top:74px" width="32" height="32" viewBox="0 0 24 24" fill="#ccccdc"><path d="M17,9.17a1,1,0,0,0-1.41,0L12,12.71,8.46,9.17a1,1,0,0,0-1.41,0,1,1,0,0,0,0,1.42l4.24,4.24a1,1,0,0,0,1.42,0L17,10.59A1,1,0,0,0,17,9.17Z"/></svg><svg class="a" style="left:2664px;top:72px" width="36" height="36" viewBox="0 0 24 24" fill="#ccccdc"><path d="M21.71,20.29,18,16.61A9,9,0,1,0,16.61,18l3.68,3.68a1,1,0,0,0,1.42,0A1,1,0,0,0,21.71,20.29ZM11,18a7,7,0,1,1,7-7A7,7,0,0,1,11,18Zm4-8H7a1,1,0,0,0,0,2h8a1,1,0,0,0,0-2Z"/></svg><svg class="a" style="left:2752px;top:72px" width="36" height="36" viewBox="0 0 24 24" fill="#ccccdc"><path d="M19.91,15.51H15.38a1,1,0,0,0,0,2h2.4A8,8,0,0,1,4,12a1,1,0,0,0-2,0,10,10,0,0,0,16.88,7.23V21a1,1,0,0,0,2,0V16.5A1,1,0,0,0,19.91,15.51ZM12,2A10,10,0,0,0,5.12,4.77V3a1,1,0,0,0-2,0V7.5a1,1,0,0,0,1,1h4.5a1,1,0,0,0,0-2H6.22A8,8,0,0,1,20,12a1,1,0,0,0,2,0A10,10,0,0,0,12,2Z"/></svg><svg class="a" style="left:2824px;top:74px" width="32" height="32" viewBox="0 0 24 24" fill="#ccccdc"><path d="M17,9.17a1,1,0,0,0-1.41,0L12,12.71,8.46,9.17a1,1,0,0,0-1.41,0,1,1,0,0,0,0,1.42l4.24,4.24a1,1,0,0,0,1.42,0L17,10.59A1,1,0,0,0,17,9.17Z"/></svg><svg class="a" style="left:2681px;top:292px" width="36" height="36" viewBox="0 0 24 24" fill="#ccccdc"><path d="M18,14a4,4,0,0,0-3.08,1.48l-5.1-2.35a3.64,3.64,0,0,0,0-2.26l5.1-2.35A4,4,0,1,0,14,6a4.17,4.17,0,0,0,.07.71L8.79,9.14a4,4,0,1,0,0,5.72l5.28,2.43A4.17,4.17,0,0,0,14,18a4,4,0,1,0,4-4ZM18,4a2,2,0,1,1-2,2A2,2,0,0,1,18,4ZM6,14a2,2,0,1,1,2-2A2,2,0,0,1,6,14Zm12,6a2,2,0,1,1,2-2A2,2,0,0,1,18,20Z"/></svg><svg class="a" style="left:2832px;top:294px" width="32" height="32" viewBox="0 0 24 24" fill="#ccccdc"><path d="M17,9.17a1,1,0,0,0-1.41,0L12,12.71,8.46,9.17a1,1,0,0,0-1.41,0,1,1,0,0,0,0,1.42l4.24,4.24a1,1,0,0,0,1.42,0L17,10.59A1,1,0,0,0,17,9.17Z"/></svg><svg class="a" style="left:36px;top:390px" width="32" height="32" viewBox="0 0 24 24" fill="#ccccdc"><path d="M17,9.17a1,1,0,0,0-1.41,0L12,12.71,8.46,9.17a1,1,0,0,0-1.41,0,1,1,0,0,0,0,1.42l4.24,4.24a1,1,0,0,0,1.42,0L17,10.59A1,1,0,0,0,17,9.17Z"/></svg><svg class="a" style="left:2816px;top:890px" width="36" height="36" viewBox="0 0 24 24" fill="#8f8f9d"><path d="M17.71,11.29a1,1,0,0,0-1.42,0L13,14.59V7a1,1,0,0,0-2,0v7.59l-3.29-3.3a1,1,0,0,0-1.42,1.42l5,5a1,1,0,0,0,.33.21.94.94,0,0,0,.76,0,1,1,0,0,0,.33-.21l5-5A1,1,0,0,0,17.71,11.29Z"/></svg><svg class="a" style="left:2816px;top:970px" width="36" height="36" viewBox="0 0 24 24" fill="#8f8f9d"><path d="M6.71,5.29a1,1,0,0,0-.33-.21,1,1,0,0,0-.76,0,1,1,0,0,0-.33.21l-2,2A1,1,0,0,0,4.71,8.71L5,8.41V17a1,1,0,0,0,2,0V8.41l.29.3a1,1,0,0,0,1.42,0,1,1,0,0,0,0-1.42ZM11,8H21a1,1,0,0,0,0-2H11a1,1,0,0,0,0,2Zm10,3H11a1,1,0,0,0,0,2H21a1,1,0,0,0,0-2Zm0,5H11a1,1,0,0,0,0,2H21a1,1,0,0,0,0-2Z"/></svg><svg class="a" style="left:2816px;top:1068px" width="36" height="36" viewBox="0 0 24 24" fill="#8f8f9d"><path d="M19,2H5A3,3,0,0,0,2,5V6.17a3,3,0,0,0,.25,1.2l0,.06a2.81,2.81,0,0,0,.59.86L9,14.41V21a1,1,0,0,0,.47.85A1,1,0,0,0,10,22a1,1,0,0,0,.45-.11l4-2A1,1,0,0,0,15,19V14.41l6.12-6.12a2.81,2.81,0,0,0,.59-.86l0-.06A3,3,0,0,0,22,6.17V5A3,3,0,0,0,19,2ZM13.29,13.29A1,1,0,0,0,13,14v4.38l-2,1V14a1,1,0,0,0-.29-.71L5.41,8H18.59ZM20,6H4V5A1,1,0,0,1,5,4H19a1,1,0,0,1,1,1Z"/></svg><svg class="a" style="left:2816px;top:1246px" width="36" height="36" viewBox="0 0 24 24" fill="#8f8f9d"><path d="M12,2A10,10,0,1,0,22,12,10.01114,10.01114,0,0,0,12,2Zm0,18a8,8,0,1,1,8-8A8.00917,8.00917,0,0,1,12,20ZM12,6a.99974.99974,0,0,0-1,1v4H8a1,1,0,0,0,0,2h4a.99974.99974,0,0,0,1-1V7A.99974.99974,0,0,0,12,6Z"/></svg><svg class="a" style="left:2816px;top:1325.5px" width="36" height="36" viewBox="0 0 24 24" fill="#8f8f9d"><path d="M3,7H21a1,1,0,0,0,0-2H3A1,1,0,0,0,3,7ZM9,15H3a1,1,0,0,0,0,2H9a1,1,0,0,0,0-2Zm10-5H3a1,1,0,0,0,0,2H19a1,1,0,0,1,0,2H15.41l.3-.29a1,1,0,0,0-1.42-1.42l-2,2a1,1,0,0,0-.21.33,1,1,0,0,0,0,.76,1,1,0,0,0,.21.33l2,2a1,1,0,0,0,1.42,0,1,1,0,0,0,0-1.42l-.3-.29H19a3,3,0,0,0,0-6Z"/></svg><svg class="a" style="left:2816px;top:1407px" width="36" height="36" viewBox="0 0 24 24" fill="#8f8f9d"><path d="M6,6A2,2,0,0,1,8,4,1,1,0,0,0,8,2,4,4,0,0,0,4,6V9a2,2,0,0,1-2,2,1,1,0,0,0,0,2,2,2,0,0,1,2,2v3a4,4,0,0,0,4,4,1,1,0,0,0,0-2,2,2,0,0,1-2-2V15a4,4,0,0,0-1.38-3A4,4,0,0,0,6,9Zm16,5a2,2,0,0,1-2-2V6a4,4,0,0,0-4-4,1,1,0,0,0,0,2,2,2,0,0,1,2,2V9a4,4,0,0,0,1.38,3A4,4,0,0,0,18,15v3a2,2,0,0,1-2,2,1,1,0,0,0,0,2,4,4,0,0,0,4-4V15a2,2,0,0,1,2-2,1,1,0,0,0,0-2Z"/></svg><svg class="a" style="left:2814px;top:1145px" width="42" height="42" viewBox="0 0 42 42" fill="none" stroke="#8f8f9d" stroke-width="2.9" stroke-linecap="round" stroke-linejoin="round"><path d="M23 37.5 H7.5 a3.2 3.2 0 0 1 -3.2 -3.2 V7.5 a3.2 3.2 0 0 1 3.2 -3.2 H17 L30 14.5 H17 V4.5"/><text x="9.6" y="31.6" font-family="Liberation Sans, sans-serif" font-weight="700" font-size="15" textLength="28.5" lengthAdjust="spacingAndGlyphs" fill="#8f8f9d" stroke="#8f8f9d" stroke-width="0.5">LOG</text></svg><div class="a" style="left:2430.5px;top:394.3px;width:7.2px;height:23px;background:transparent;border:2px solid #ccccdc;border-radius:3.6px;"></div><div class="a" style="left:2440.4px;top:394.3px;width:7.2px;height:23px;background:transparent;border:2px solid #ccccdc;border-radius:3.6px;"></div><svg class="a" style="left:2668px;top:390px" width="32" height="32" viewBox="0 0 32 32" fill="none" stroke="#9dbff5" stroke-width="2" stroke-linecap="round" stroke-linejoin="round"><g transform="translate(18.75 12.85) rotate(45)"><path d="M0,-11.8 C4.6,-8.8 5.6,-3.5 5.6,1.5 C5.6,5.5 4.8,9 3.2,11.6 H-3.2 C-4.8,9 -5.6,5.5 -5.6,1.5 C-5.6,-3.5 -4.6,-8.8 0,-11.8 Z"/><circle cx="0.2" cy="-3.6" r="1.7" fill="#9dbff5" stroke="none"/><path d="M-5.5,4.2 L-10,6.8 V11 L-4.8,9.6"/><path d="M5.5,4.2 L10,6.8 V11 L4.8,9.6"/></g></svg>
</div>
</body></html>
